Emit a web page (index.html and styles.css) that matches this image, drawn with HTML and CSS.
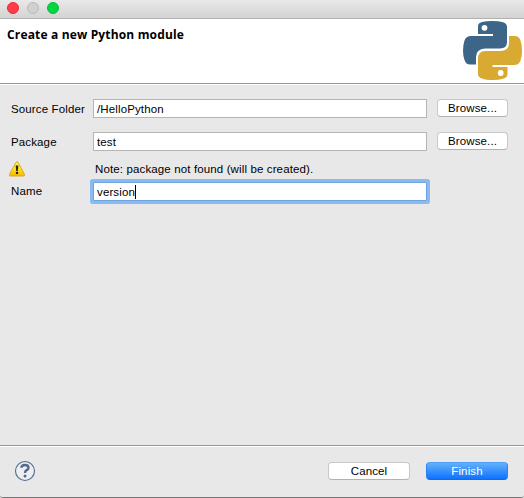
FILE: index.html
```
<!DOCTYPE html>
<html lang="en">
<head>
<meta charset="utf-8">
<title>Create a new Python module</title>
<link rel="stylesheet" href="styles.css">
</head>
<body>
<main class="dialog">
  <div class="titlebar">
    <span class="light close"></span><span class="light minimize"></span><span class="light expand"></span>
  </div>
  <header class="header">
    <h1>Create a new Python module</h1>
    <svg class="logo" width="60" height="60" viewBox="0 0 60 60">
      <path fill="#3d6587" d="M15 13V5Q15 2 19 1Q23 0 29 0Q36 0 40 1.200Q44 2.500 44 6V21Q44 27.500 37 27.500H22Q13 28 13 36V43.500H7Q3 43.500 1.500 39Q0 35 0 29.500Q0 24 1.500 19.500Q3 15 8 15H30V13Z"/>
      <path fill="#d9aa32" d="M46 15H52Q56 15 57.500 19.500Q59 24 59 29.500Q59 35 57.500 39.500Q56 44 51 44H29.500V46H44.500V53Q44.500 56.500 40 57.800Q36 59 30 59Q23 59 19 57.500Q15 56 15 53V38Q15 30 22.500 30H37Q46 30 46 22Z"/>
      <circle cx="21.500" cy="6.800" r="2.900" fill="#fff"/><circle cx="37.700" cy="52" r="2.900" fill="#fff"/>
    </svg>
  </header>
  <section class="form">
    <div class="row">
      <label class="folder">Source Folder</label><div class="field">/HelloPython</div><button>Browse...</button>
    </div>
    <div class="row">
      <label class="package">Package</label><div class="field">test</div><button>Browse...</button>
    </div>
    <div class="note">
      <svg width="18" height="18" viewBox="0 0 18 18">
        <defs><linearGradient id="warn" x2="0" y2="1"><stop stop-color="#fff36a"/><stop offset=".55" stop-color="#ffdf16"/><stop offset="1" stop-color="#f5b900"/></linearGradient></defs>
        <path d="M8 1.300Q9 0 10 1.300L16.500 13.400Q17 15 15.700 15H2.300Q1 15 1.500 13.400Z" fill="url(#warn)" stroke="#dda52b" stroke-width="1"/>
        <path d="M7.700 4.500H10.300L9.800 9.900H8.200Z" fill="#29220a"/><rect x="7.900" y="10.800" width="2.200" height="2.200" fill="#29220a"/>
      </svg>
      <span class="message">Note: package not found (will be created).</span>
    </div>
    <div class="row">
      <label class="name">Name</label><div class="field focused"><span>version</span><i class="caret"></i></div>
    </div>
  </section>
  <footer class="footer">
    <svg width="22" height="22" viewBox="0 0 22 22" fill="none" stroke="#53698c">
      <circle cx="11" cy="11" r="9.500" fill="#eceef1" stroke-width="1.100"/>
      <path d="M7.400 7.800Q7.500 5 11 5Q14.500 5 14.500 7.700Q14.500 9.300 12.600 10.200Q11 11 11 13" stroke-width="2.400"/>
      <circle cx="11" cy="16" r="1.500" fill="#53698c" stroke="none"/>
    </svg>
    <div class="actions"><button class="cancel">Cancel</button><button class="primary">Finish</button></div>
  </footer>
</main>
</body>
</html>
```
FILE: styles.css
```
* { box-sizing: border-box; }
body { margin: 0; background: #e8e8e8; }
.dialog {
  width: 524px; height: 498px;
  display: flex; flex-direction: column;
  background: #e8e8e8; color: #000;
  border-bottom: 1px solid #777;
  border-radius: 0 0 3px 3px;
  font: 11.5px/14px "Liberation Sans", Arial, sans-serif;
  letter-spacing: .13px;
  white-space: nowrap;
}
.titlebar {
  flex: none; height: 19px; padding: 2px 0 0 7px;
  display: flex; gap: 8px;
  background: linear-gradient(#e9e9e9, #d3d3d3);
  border-bottom: 1px solid #b1b1b1;
}
.light { width: 12px; height: 12px; border-radius: 50%; border: 1px solid; }
.close { background: #ff3b47; border-color: #e52c38; }
.minimize { background: #d0d0d0; border-color: #b9b9b9; }
.expand { background: #00d742; border-color: #12b83c; }
.header {
  flex: none; height: 65px; padding: 2px 1px 0 7px;
  display: flex; justify-content: space-between;
  background: #fff; border-bottom: 1px solid #979797;
}
.header h1 {
  margin: 5px 0 0; font: bold 12px/17px "Open Sans", "Noto Sans", sans-serif;
  letter-spacing: .16px;
}
.logo { flex: none; }
.form { flex: 1; padding: 14px 16px 0 11px; border-top: 1px solid #fff; }
.row { display: flex; height: 19px; margin-bottom: 14px; }
.row label { width: 82px; padding-top: 3px; }
.row .name { padding-top: 2px; }
.field {
  width: 334px; height: 19px; padding: 2px 3px;
  display: flex; background: #fff; border: 1px solid #b5b5b5;
}
.focused { border-color: #6da3df; box-shadow: 0 0 0 3px #8abaf0; border-radius: 1px; }
.caret { width: 1px; height: 14px; background: #000; }
button {
  flex: none; width: 71px; height: 18px; margin-left: 10px; padding: 0;
  border: 1px solid #c8c8c8; border-bottom-color: #b2b2b2; border-radius: 4px;
  background: #fff; color: #000; font: inherit; line-height: 15px; letter-spacing: inherit;
}
.note { display: flex; height: 17px; margin: -4px 0 4px -3px; }
.message { margin: 1px 0 0 69px; }
.footer {
  flex: none; height: 52px; padding: 14px 16px 0 14px;
  display: flex; justify-content: space-between;
  border-top: 1px solid #979797; box-shadow: inset 0 1px #fff;
}
.actions { display: flex; gap: 16px; padding-top: 2px; }
.actions button { width: 82px; margin: 0; }
.actions .primary {
  color: #fff; background: linear-gradient(#62b1fa, #0d72ff);
  border-color: #4d9ff7 #2e81f5 #2161f0;
}
```
